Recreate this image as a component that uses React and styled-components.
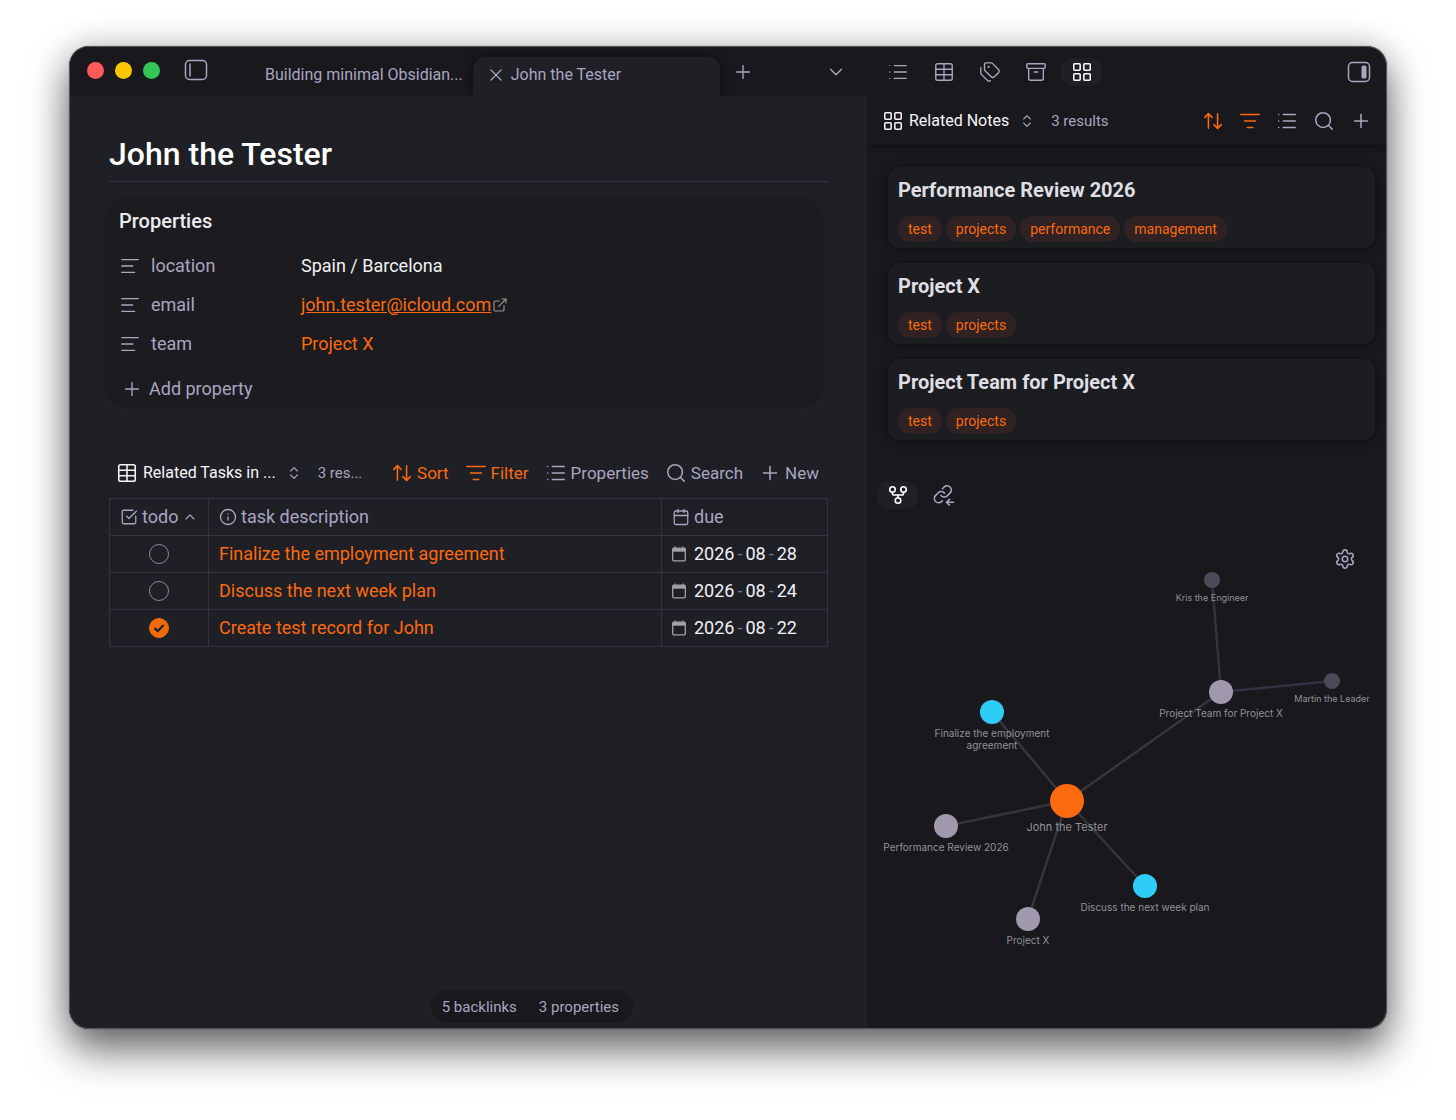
import React, { useState } from "react";
import styled, { createGlobalStyle, css } from "styled-components";
import {
  AlignLeft,
  Archive,
  ArrowUpDown,
  Calendar,
  ChevronDown,
  ChevronsUpDown,
  ChevronUp,
  ExternalLink,
  GitFork,
  Info,
  LayoutGrid,
  List,
  ListFilter,
  Plus,
  Search,
  Settings,
  SquareCheckBig,
  Table,
  Tags,
  X,
} from "lucide-react";

const tasks = [
  { id: 1, title: "Finalize the employment agreement", due: "2026-08-28", done: false },
  { id: 2, title: "Discuss the next week plan", due: "2026-08-24", done: false },
  { id: 3, title: "Create test record for John", due: "2026-08-22", done: true },
];

const notes = [
  { title: "Performance Review 2026", tags: ["test", "projects", "performance", "management"] },
  { title: "Project X", tags: ["test", "projects"] },
  { title: "Project Team for Project X", tags: ["test", "projects"] },
];

const nodes = {
  john: { x: 200, y: 282, r: 17, color: "#fa6a0f", size: 11, label: ["John the Tester"] },
  team: { x: 354, y: 173, r: 12, color: "#a099ae", size: 10, label: ["Project Team for Project X"] },
  kris: { x: 345, y: 61, r: 8, color: "#4b4a58", size: 9, label: ["Kris the Engineer"] },
  martin: { x: 465, y: 162, r: 8, color: "#4b4a58", size: 9, label: ["Martin the Leader"] },
  finalize: { x: 125, y: 193, r: 12, color: "#2ecdf8", size: 10, label: ["Finalize the employment", "agreement"] },
  review: { x: 79, y: 307, r: 12, color: "#a099ae", size: 10, label: ["Performance Review 2026"] },
  discuss: { x: 278, y: 367, r: 12, color: "#2ecdf8", size: 10, label: ["Discuss the next week plan"] },
  project: { x: 161, y: 400, r: 12, color: "#a099ae", size: 10, label: ["Project X"] },
};

const links = [
  ["john", "finalize"],
  ["john", "team"],
  ["john", "review"],
  ["john", "discuss"],
  ["john", "project"],
  ["team", "kris", true],
  ["team", "martin", true],
];

// Icons that lucide doesn't have
const SidebarIcon = ({ right }) => (
  <svg width="24" height="22" viewBox="0 0 24 22" fill="none" stroke="currentColor" strokeWidth="1.5">
    <rect x="1.5" y="1.5" width="21" height="19" rx="4" />
    {right ? (
      <rect x="14.5" y="4.5" width="5" height="13" rx="1.5" fill="currentColor" stroke="none" />
    ) : (
      <path d="M6 5v12" strokeLinecap="round" />
    )}
  </svg>
);

const BacklinkIcon = () => (
  <svg
    width="22"
    height="22"
    viewBox="0 0 24 24"
    fill="none"
    stroke="currentColor"
    strokeWidth="1.7"
    strokeLinecap="round"
    strokeLinejoin="round"
  >
    <path d="M8.600 12.400a4.600 4.600 0 0 0 6.900.5l3.200-3.200a4.600 4.600 0 0 0-6.500-6.500l-1.800 1.800" />
    <path d="M12.600 10a4.600 4.600 0 0 0-6.900-.5l-3 3.200a4.600 4.600 0 0 0 6.500 6.500l1-1" />
    <path d="M22.500 20h-7.500M18 16.800 14.800 20l3.200 3.200" />
  </svg>
);

const CalendarMini = () => (
  <svg width="14" height="16" viewBox="0 0 14 16" fill="none" stroke="#a3a3a3">
    <rect x="0.7" y="2.2" width="12.6" height="12.6" rx="1" strokeWidth="1.3" />
    <path d="M1 4h12" strokeWidth="3.4" />
    <path d="M3 0.5v2M11 0.5v2" strokeWidth="1.2" />
  </svg>
);

const Graph = () => (
  <StyledGraph viewBox="0 0 519 508" preserveAspectRatio="xMidYMin meet" role="img" aria-label="Local graph">
    {links.map(([from, to, far]) => (
      <line
        key={from + to}
        x1={nodes[from].x}
        y1={nodes[from].y}
        x2={nodes[to].x}
        y2={nodes[to].y}
        stroke={far ? "#343140" : "#363539"}
        strokeWidth="2.5"
      />
    ))}
    {Object.entries(nodes).map(([id, n]) => (
      <g key={id}>
        <circle cx={n.x} cy={n.y} r={n.r} fill={n.color} />
        {n.label.map((line, i) => (
          <text key={line} x={n.x} y={n.y + n.r + 13 + i * 12} fontSize={n.size} textAnchor="middle">
            {line}
          </text>
        ))}
      </g>
    ))}
  </StyledGraph>
);

const Property = ({ name, children }) => (
  <PropertyRow>
    <PropertyName>
      <AlignLeft size={22} strokeWidth={1.5} />
      {name}
    </PropertyName>
    <dd>{children}</dd>
  </PropertyRow>
);

const App = () => {
  const [done, setDone] = useState(tasks.filter((t) => t.done).map((t) => t.id));
  const [location, setLocation] = useState("Spain / Barcelona");

  const toggle = (id) => {
    setDone(done.includes(id) ? done.filter((d) => d !== id) : [...done, id]);
  };

  return (
    <>
      <GlobalStyle />
      <Desktop>
        <Window>
          <Main>
            <TabBar>
              <WindowControls>
                <Lights>
                  <Light $color="#ff5b5c" />
                  <Light $color="#fbc800" />
                  <Light $color="#33c758" />
                </Lights>
                <IconButton aria-label="Toggle left sidebar">
                  <SidebarIcon />
                </IconButton>
              </WindowControls>
              <Tab>Building minimal Obsidian...</Tab>
              <Tab $active>
                <X size={20} strokeWidth={1.5} />
                John the Tester
              </Tab>
              <IconButton aria-label="New tab">
                <Plus size={22} strokeWidth={1.5} />
              </IconButton>
              <TabMenu aria-label="Tab list">
                <ChevronDown size={22} strokeWidth={1.5} />
              </TabMenu>
            </TabBar>
            <Note>
              <h1>John the Tester</h1>
              <Properties>
                <h2>Properties</h2>
                <dl>
                  <Property name="location">
                    <input
                      aria-label="location"
                      value={location}
                      onChange={(e) => setLocation(e.target.value)}
                    />
                  </Property>
                  <Property name="email">
                    <MailLink href="mailto:john.tester@icloud.com">john.tester@icloud.com</MailLink>
                    <ExternalLink size={16} strokeWidth={1.7} color="#98968f" />
                  </Property>
                  <Property name="team">
                    <NoteLink href="#project-x">Project X</NoteLink>
                  </Property>
                </dl>
                <AddProperty>
                  <Plus size={22} strokeWidth={1.5} />
                  Add property
                </AddProperty>
              </Properties>

              <BaseBar>
                <ViewButton>
                  <Table size={22} strokeWidth={1.7} />
                  Related Tasks in ...
                  <ChevronsUpDown size={16} strokeWidth={1.7} />
                </ViewButton>
                <Results>3 res...</Results>
                <Tools>
                  <Tool $active>
                    <ArrowUpDown size={22} strokeWidth={1.7} />
                    Sort
                  </Tool>
                  <Tool $active>
                    <ListFilter size={22} strokeWidth={1.7} />
                    Filter
                  </Tool>
                  <Tool>
                    <List size={22} strokeWidth={1.7} />
                    Properties
                  </Tool>
                  <Tool>
                    <Search size={22} strokeWidth={1.7} />
                    Search
                  </Tool>
                  <Tool>
                    <Plus size={22} strokeWidth={1.7} />
                    New
                  </Tool>
                </Tools>
              </BaseBar>
              <TaskTable>
                <colgroup>
                  <TodoCol />
                  <col />
                  <DueCol />
                </colgroup>
                <thead>
                  <tr>
                    <th>
                      <HeadCell>
                        <SquareCheckBig size={18} strokeWidth={1.7} />
                        todo
                        <ChevronUp size={16} strokeWidth={1.7} />
                      </HeadCell>
                    </th>
                    <th>
                      <HeadCell>
                        <Info size={18} strokeWidth={1.7} />
                        task description
                      </HeadCell>
                    </th>
                    <th>
                      <HeadCell>
                        <Calendar size={18} strokeWidth={1.7} />
                        due
                      </HeadCell>
                    </th>
                  </tr>
                </thead>
                <tbody>
                  {tasks.map((task) => (
                    <tr key={task.id}>
                      <td>
                        <Check>
                          <input
                            type="checkbox"
                            aria-label={task.title}
                            checked={done.includes(task.id)}
                            onChange={() => toggle(task.id)}
                          />
                          <svg viewBox="0 0 20 20" fill="none" stroke="#1f1f26" strokeWidth="2.2">
                            <path d="M5.500 10.200 8.700 13l6-6" />
                          </svg>
                        </Check>
                      </td>
                      <td>
                        <NoteLink href="#task">{task.title}</NoteLink>
                      </td>
                      <td>
                        <DueDate dateTime={task.due}>
                          <CalendarMini />
                          {task.due.split("-").map((part, i) => (
                            <React.Fragment key={i}>
                              {i > 0 && <i>-</i>}
                              <span>{part}</span>
                            </React.Fragment>
                          ))}
                        </DueDate>
                      </td>
                    </tr>
                  ))}
                </tbody>
              </TaskTable>
            </Note>
            <StatusBar>
              <span>5 backlinks</span>
              <span>3 properties</span>
            </StatusBar>
          </Main>

          <Sidebar>
            <SideTabs>
              <SideTab aria-label="Outline">
                <List size={22} strokeWidth={1.5} />
              </SideTab>
              <SideTab aria-label="Table">
                <Table size={22} strokeWidth={1.5} />
              </SideTab>
              <SideTab aria-label="Tags">
                <Tags size={22} strokeWidth={1.5} />
              </SideTab>
              <SideTab aria-label="Archive">
                <Archive size={22} strokeWidth={1.5} />
              </SideTab>
              <SideTab $active aria-label="Related notes">
                <LayoutGrid size={22} strokeWidth={1.7} />
              </SideTab>
              <RightToggle aria-label="Toggle right sidebar">
                <SidebarIcon right />
              </RightToggle>
            </SideTabs>
            <SideBar>
              <ViewButton>
                <LayoutGrid size={22} strokeWidth={1.7} />
                Related Notes
                <ChevronsUpDown size={16} strokeWidth={1.7} />
              </ViewButton>
              <Results>3 results</Results>
              <SideTools>
                <Tool $active aria-label="Sort">
                  <ArrowUpDown size={22} strokeWidth={1.7} />
                </Tool>
                <Tool $active aria-label="Filter">
                  <ListFilter size={22} strokeWidth={1.7} />
                </Tool>
                <Tool aria-label="Properties">
                  <List size={22} strokeWidth={1.7} />
                </Tool>
                <Tool aria-label="Search">
                  <Search size={22} strokeWidth={1.7} />
                </Tool>
                <Tool aria-label="New">
                  <Plus size={22} strokeWidth={1.7} />
                </Tool>
              </SideTools>
            </SideBar>
            <Cards>
              {notes.map((note) => (
                <Card key={note.title}>
                  <h3>{note.title}</h3>
                  <TagList>
                    {note.tags.map((tag) => (
                      <Tag key={tag} href={`#${tag}`}>
                        {tag}
                      </Tag>
                    ))}
                  </TagList>
                </Card>
              ))}
            </Cards>
            <GraphTabs>
              <SideTab $active aria-label="Graph">
                <GitFork size={22} strokeWidth={1.8} />
              </SideTab>
              <SideTab aria-label="Backlinks">
                <BacklinkIcon />
              </SideTab>
            </GraphTabs>
            <GraphPane>
              <Graph />
              <GraphSettings aria-label="Graph settings">
                <Settings size={22} strokeWidth={1.7} />
              </GraphSettings>
            </GraphPane>
          </Sidebar>
        </Window>
      </Desktop>
    </>
  );
};

const GlobalStyle = createGlobalStyle`
  * {
    box-sizing: border-box;
  }
  body {
    margin: 0;
    background: #fff;
    color: #aaa5c0;
    font-family: Roboto, "Liberation Sans", sans-serif;
    font-size: 16px;
    line-height: 24px;
  }
  h1, h2, h3, dl, dd {
    margin: 0;
  }
  button {
    border: none;
    background: none;
    padding: 0;
    color: inherit;
    font: inherit;
    white-space: nowrap;
    cursor: pointer;
  }
  svg {
    flex: none;
  }
`;
const Desktop = styled.div`
  min-height: 100vh;
  padding: 46px 69px 91px;
  display: flex;
  overflow: hidden;
`;
const Window = styled.div`
  flex: 1;
  display: grid;
  grid-template-columns: minmax(0, 797fr) minmax(0, 519fr);
  border: 1px solid #57575b;
  border-radius: 20px;
  overflow: hidden;
  background: #19181d;
  box-shadow: 0 0 1px rgba(0, 0, 0, 0.8), 0 22px 40px rgba(0, 0, 0, 0.55),
    0 0 34px rgba(0, 0, 0, 0.2);
`;
const Main = styled.main`
  display: flex;
  flex-direction: column;
  background: #1f1f26;
`;
const TabBar = styled.div`
  height: 49px;
  display: flex;
  align-items: center;
  padding-left: 17px;
  background: #19181d;
`;
const WindowControls = styled.div`
  display: flex;
  align-items: center;
  gap: 24px;
  padding-bottom: 3px;
`;
const Lights = styled.div`
  display: flex;
  gap: 11px;
`;
const Light = styled.span`
  width: 17px;
  height: 17px;
  border-radius: 50%;
  background: ${(props) => props.$color};
`;
const IconButton = styled.button`
  display: flex;
  align-items: center;
  justify-content: center;
`;
const TabMenu = styled(IconButton)`
  margin-left: auto;
  margin-right: 20px;
`;
const Tab = styled.button`
  align-self: flex-end;
  height: 39px;
  display: flex;
  align-items: center;
  padding-bottom: 4px;
  margin-left: 57px;
  ${(props) =>
    props.$active &&
    css`
      width: 247px;
      gap: 5px;
      padding-left: 13px;
      margin: 0 12px 0 10px;
      border-radius: 12px 12px 0 0;
      background: #1f1f26;
      box-shadow: 0 0 8px rgba(0, 0, 0, 0.5);
    `}
`;
const Note = styled.article`
  position: relative;
  padding: 36px 39px 0;
  background: #1f1f26;
  h1 {
    padding-bottom: 5px;
    border-bottom: 1px solid #353342;
    color: #fff;
    font-size: 32px;
    font-weight: 500;
    line-height: 44px;
  }
`;
const Properties = styled.section`
  margin: 16px 4px 51px -5px;
  padding: 10px 15px 2px;
  border-radius: 24px;
  background: #1c1c20;
  font-size: 18px;
  h2 {
    margin-bottom: 12px;
    color: #ecebee;
    font-size: 20px;
    font-weight: 500;
    line-height: 26px;
  }
`;
const PropertyRow = styled.div`
  height: 39px;
  display: flex;
  align-items: center;
  dd {
    display: flex;
    align-items: center;
    gap: 1px;
  }
  input {
    width: 400px;
    padding: 0;
    border: none;
    outline: none;
    background: none;
    color: #f2f1f4;
    font: inherit;
  }
`;
const PropertyName = styled.dt`
  width: 182px;
  display: flex;
  align-items: center;
  gap: 10px;
`;
const NoteLink = styled.a`
  color: #fa6a0f;
  text-decoration: none;
`;
const MailLink = styled(NoteLink)`
  text-decoration: underline;
`;
const AddProperty = styled.button`
  height: 36px;
  display: flex;
  align-items: center;
  gap: 6px;
  margin: 8px 0 0 2px;
`;
const BaseBar = styled.div`
  height: 26px;
  display: flex;
  align-items: center;
  gap: 16px;
  margin-bottom: 12px;
  padding: 0 9px 0 7px;
`;
const ViewButton = styled.button`
  display: flex;
  align-items: center;
  gap: 5px;
  color: #f6f5f8;
  svg:last-child {
    margin-left: 5px;
    color: #aaa5c0;
  }
`;
const Results = styled.span`
  font-size: 15px;
`;
const Tools = styled.div`
  display: flex;
  gap: 16px;
  margin-left: auto;
`;
const SideTools = styled(Tools)`
  gap: 15px;
`;
const Tool = styled.button`
  display: flex;
  align-items: center;
  gap: 4px;
  color: ${(props) => (props.$active ? "#fa6a0f" : "#aaa5c0")};
  font-size: 17px;
`;
const TaskTable = styled.table`
  width: 100%;
  table-layout: fixed;
  border-collapse: collapse;
  font-size: 18px;
  th,
  td {
    height: 37px;
    padding: 0 10px;
    border: 1px solid #353342;
    font-weight: 400;
    text-align: left;
  }
`;
const TodoCol = styled.col`
  width: 99px;
`;
const DueCol = styled.col`
  width: 166px;
`;
const HeadCell = styled.span`
  display: flex;
  align-items: center;
  gap: 4px;
`;
const Check = styled.label`
  position: relative;
  display: flex;
  justify-content: center;
  input {
    appearance: none;
    width: 20px;
    height: 20px;
    margin: 0;
    border: 1px solid #8b87a0;
    border-radius: 50%;
  }
  input:checked {
    border-color: #f06a0a;
    background: #f06a0a;
  }
  svg {
    display: none;
    position: absolute;
    width: 20px;
    height: 20px;
  }
  input:checked + svg {
    display: block;
  }
`;
const DueDate = styled.time`
  display: flex;
  align-items: center;
  color: #f2f1f4;
  svg {
    margin-right: 8px;
  }
  i {
    padding: 0 3px;
    color: #77738c;
    font-style: normal;
  }
`;
const StatusBar = styled.footer`
  align-self: flex-end;
  height: 33px;
  display: flex;
  align-items: center;
  gap: 22px;
  margin: auto 234px 5px 0;
  padding: 0 14px 0 11px;
  border-radius: 17px;
  background: #19181d;
  font-size: 15px;
`;
const Sidebar = styled.aside`
  display: flex;
  flex-direction: column;
`;
const SideTabs = styled.div`
  height: 49px;
  display: flex;
  align-items: center;
  gap: 5px;
  padding: 0 15px 0 10px;
`;
const SideTab = styled(IconButton)`
  width: 41px;
  height: 28px;
  border-radius: 12px;
  ${(props) =>
    props.$active &&
    css`
      background: #1f1f26;
      color: #fff;
    `}
`;
const RightToggle = styled(IconButton)`
  margin-left: auto;
`;
const SideBar = styled.div`
  height: 49px;
  display: flex;
  align-items: center;
  gap: 16px;
  padding: 0 14px 0 15px;
  box-shadow: 0 4px 5px -2px rgba(0, 0, 0, 0.35);
`;
const Cards = styled.div`
  display: flex;
  flex-direction: column;
  gap: 15px;
  padding: 22px 11px 0 21px;
`;
const Card = styled.article`
  height: 81px;
  padding: 10px;
  border-radius: 12px;
  background: #1c1d21;
  box-shadow: 0 1px 8px rgba(0, 0, 0, 0.45);
  h3 {
    margin-bottom: 13px;
    color: #dfdee2;
    font-size: 20px;
    font-weight: 700;
    line-height: 26px;
  }
`;
const TagList = styled.div`
  display: flex;
  gap: 4px;
`;
const Tag = styled.a`
  padding: 0 10px;
  border-radius: 13px;
  background: #302122;
  color: #fa6a0f;
  font-size: 14px;
  line-height: 26px;
  text-decoration: none;
`;
const GraphTabs = styled.div`
  display: flex;
  gap: 5px;
  padding: 41px 10px 10px;
`;
const GraphPane = styled.div`
  position: relative;
  flex: 1;
`;
const StyledGraph = styled.svg`
  display: block;
  width: 100%;
  font-family: Inter, sans-serif;
  text {
    fill: #929097;
  }
`;
const GraphSettings = styled(IconButton)`
  position: absolute;
  top: 29px;
  right: 30px;
`;

export default App;
